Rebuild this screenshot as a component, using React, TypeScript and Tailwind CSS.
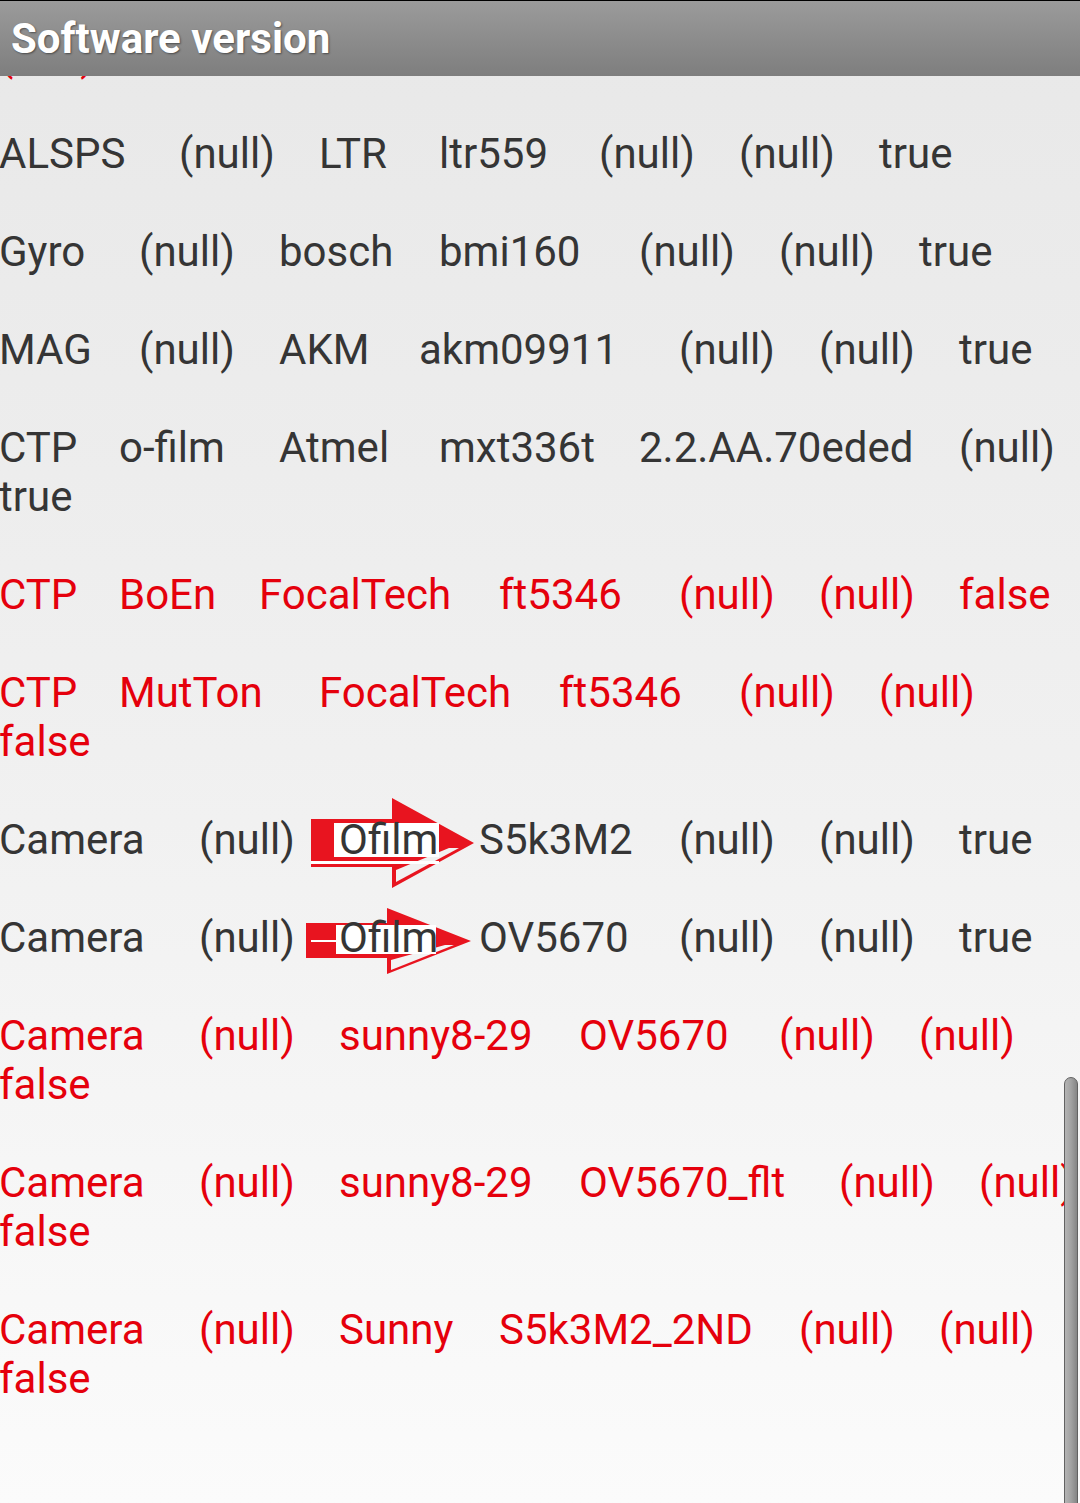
import React from "react";

type Word = [string, number];
type Entry = { red?: boolean; lines: Word[][]; arrow?: 1 | 2 };

const entries: Entry[] = [
  { red: true, lines: [[["(null)", 0]]] },
  {
    lines: [[["ALSPS", 0], ["(null)", 180], ["LTR", 320], ["ltr559", 440], ["(null)", 600], ["(null)", 740], ["true", 880]]],
  },
  {
    lines: [[["Gyro", 0], ["(null)", 140], ["bosch", 280], ["bmi160", 440], ["(null)", 640], ["(null)", 780], ["true", 920]]],
  },
  {
    lines: [[["MAG", 0], ["(null)", 140], ["AKM", 280], ["akm09911", 420], ["(null)", 680], ["(null)", 820], ["true", 960]]],
  },
  {
    lines: [
      [["CTP", 0], ["o-film", 120], ["Atmel", 280], ["mxt336t", 440], ["2.2.AA.70eded", 640], ["(null)", 960]],
      [["true", 0]],
    ],
  },
  {
    red: true,
    lines: [[["CTP", 0], ["BoEn", 120], ["FocalTech", 260], ["ft5346", 500], ["(null)", 680], ["(null)", 820], ["false", 960]]],
  },
  {
    red: true,
    lines: [
      [["CTP", 0], ["MutTon", 120], ["FocalTech", 320], ["ft5346", 560], ["(null)", 740], ["(null)", 880]],
      [["false", 0]],
    ],
  },
  {
    arrow: 1,
    lines: [[["Camera", 0], ["(null)", 200], ["Ofilm", 340], ["S5k3M2", 480], ["(null)", 680], ["(null)", 820], ["true", 960]]],
  },
  {
    arrow: 2,
    lines: [[["Camera", 0], ["(null)", 200], ["Ofilm", 340], ["OV5670", 480], ["(null)", 680], ["(null)", 820], ["true", 960]]],
  },
  {
    red: true,
    lines: [
      [["Camera", 0], ["(null)", 200], ["sunny8-29", 340], ["OV5670", 580], ["(null)", 780], ["(null)", 920]],
      [["false", 0]],
    ],
  },
  {
    red: true,
    lines: [
      [["Camera", 0], ["(null)", 200], ["sunny8-29", 340], ["OV5670_flt", 580], ["(null)", 840], ["(null)", 980]],
      [["false", 0]],
    ],
  },
  {
    red: true,
    lines: [
      [["Camera", 0], ["(null)", 200], ["Sunny", 340], ["S5k3M2_2ND", 500], ["(null)", 800], ["(null)", 940]],
      [["false", 0]],
    ],
  },
];

function Arrow1() {
  return (
    <svg
      className="absolute left-[-40px] top-[-25px] pointer-events-none"
      width="190"
      height="110"
      viewBox="0 0 190 110"
    >
      <polygon points="12,29 93,29 93,8 175,53 93,98 93,77 12,77" fill="#e8141f" />
      <polygon points="97,80 97,92 160,58 150,58" fill="#f1f1f1" />
      <rect x="35" y="33" width="105" height="34" fill="#ffffff" />
      <rect x="12" y="71" width="128" height="3" fill="#ffffff" />
    </svg>
  );
}

function Arrow2() {
  return (
    <svg
      className="absolute left-[-40px] top-[-25px] pointer-events-none"
      width="190"
      height="110"
      viewBox="0 0 190 110"
    >
      <polygon points="7,35 88,35 88,20 172,53 88,86 88,70 7,70" fill="#e8141f" />
      <polygon points="92,72 92,82 155,57 146,57" fill="#f3f3f3" />
      <rect x="37" y="37" width="100" height="29" fill="#ffffff" />
      <rect x="12" y="52" width="30" height="2" fill="#ffffff" />
    </svg>
  );
}

function LineRow({ words, arrow }: { words: Word[]; arrow?: 1 | 2 }) {
  return (
    <div className="flex h-[49px] leading-[49px] whitespace-nowrap">
      {words.map(([w, x], i) => {
        const next = words[i + 1];
        const isOfilm = w === "Ofilm" && arrow;
        return (
          <span
            key={i}
            className="relative shrink-0"
            style={next ? { width: next[1] - x } : undefined}
          >
            {isOfilm && (arrow === 1 ? <Arrow1 /> : <Arrow2 />)}
            <span className="relative">{w}</span>
          </span>
        );
      })}
    </div>
  );
}

export default function App() {
  return (
    <div
      className="relative h-[1503px] w-[1080px] overflow-hidden bg-gradient-to-b from-[#e8e8e8] via-[#f0f0f0] to-[#fbfbfb]"
      style={{ fontFamily: "Roboto, 'Noto Sans', sans-serif" }}
    >
      <div className="relative z-20 h-[76px] border-t border-black bg-gradient-to-b from-[#9b9b9b] to-[#7e7e7e] pl-[11px] flex items-center">
        <span className="text-[42px] font-bold leading-[49px] text-white [text-shadow:1px_1px_2px_rgba(0,0,0,0.45)]">
          Software version
        </span>
      </div>
      <div className="relative z-10 -mt-[45px] -ml-[1px] text-[42px]">
        {entries.map((e, i) => (
          <div
            key={i}
            className={`mb-[49px] ${e.red ? "text-[#e5000c]" : "text-[#353535]"}`}
          >
            {e.lines.map((l, j) => (
              <LineRow key={j} words={l} arrow={e.arrow} />
            ))}
          </div>
        ))}
      </div>
      <div className="absolute right-[2px] top-[1077px] bottom-[-10px] z-30 w-[14px] rounded-t-full border border-[#626262] bg-gradient-to-r from-[#b4b4b4] via-[#a2a2a2] to-[#858585]" />
    </div>
  );
}
